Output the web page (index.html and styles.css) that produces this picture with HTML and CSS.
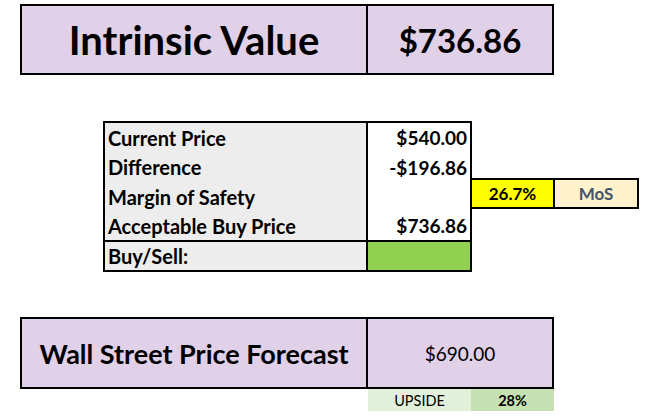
FILE: index.html
```html
<!DOCTYPE html>
<html>
<head>
<meta charset="utf-8">
<link rel="stylesheet" href="styles.css">
</head>
<body>
<div class="sheet">
  <div class="hero">
    <div class="hero-label">Intrinsic Value</div>
    <div class="hero-value">$736.86</div>
  </div>

  <div class="calc">
    <div class="calc-table">
      <div class="lbl">Current Price</div><div class="val">$540.00</div>
      <div class="lbl">Difference</div><div class="val">-$196.86</div>
      <div class="lbl">Margin of Safety</div><div class="val"></div>
      <div class="lbl">Acceptable Buy Price</div><div class="val">$736.86</div>
      <div class="lbl foot">Buy/Sell:</div><div class="val foot signal"></div>
    </div>
    <div class="mos">
      <div class="mos-pct">26.7%</div>
      <div class="mos-tag">MoS</div>
    </div>
  </div>

  <div class="forecast">
    <div class="forecast-label">Wall Street Price Forecast</div>
    <div class="forecast-value">$690.00</div>
  </div>
  <div class="upside">
    <div class="upside-label">UPSIDE</div>
    <div class="upside-value">28%</div>
  </div>
</div>
</body>
</html>
```
FILE: styles.css
```css
html, body {
  margin: 0;
  padding: 0;
  background: #ffffff;
}

.sheet {
  font-family: Lato, "Open Sans", sans-serif;
  color: #000;
  padding: 4px 0 0 20px;
  display: flex;
  flex-direction: column;
  align-items: flex-start;
}

/* top block */
.hero {
  display: flex;
  border: 2px solid #000;
  background: #e0d0e8;
  height: 67px;
}
.hero-label,
.hero-value {
  display: flex;
  align-items: center;
  justify-content: center;
  font-weight: 700;
}
.hero-label {
  width: 344px;
  border-right: 2px solid #000;
  font-size: 40px;
}
.hero-value {
  width: 184px;
  font-size: 33px;
}

/* calculation table */
.calc {
  display: flex;
  align-items: flex-start;
  margin: 46px 0 0 83px;
}
.calc-table {
  display: grid;
  grid-template-columns: 263px 102px;
  grid-template-rows: 29px 30px 29px 29px 30px;
  border: 2px solid #000;
  font-weight: 700;
  font-size: 20px;
}
.lbl {
  background: #ededed;
  border-right: 2px solid #000;
  padding-left: 3px;
  display: flex;
  align-items: center;
}
.val {
  background: #fff;
  display: flex;
  align-items: center;
  justify-content: flex-end;
  padding-right: 3px;
  font-size: 19px;
}
.foot {
  border-top: 2px solid #000;
}
.signal {
  background: #92d050;
}

.mos {
  display: flex;
  margin: 57px 0 0 -2px;
  font-weight: 700;
}
.mos-pct,
.mos-tag {
  height: 27px;
  border: 2px solid #000;
  display: flex;
  align-items: center;
  justify-content: center;
}
.mos-pct {
  width: 81px;
  background: #ffff00;
  font-size: 17px;
}
.mos-tag {
  width: 82px;
  margin-left: -2px;
  background: #fff2cc;
  color: #44546a;
  font-size: 17px;
}

/* forecast */
.forecast {
  display: flex;
  margin-top: 45px;
  border: 2px solid #000;
  background: #e0d0e8;
  height: 68px;
}
.forecast-label,
.forecast-value {
  display: flex;
  align-items: center;
  justify-content: center;
}
.forecast-label {
  width: 344px;
  border-right: 2px solid #000;
  font-weight: 700;
  font-size: 27px;
}
.forecast-value {
  width: 184px;
  font-size: 19px;
}

.upside {
  display: flex;
  margin-left: 348px;
  height: 22px;
  font-size: 14.5px;
}
.upside-label,
.upside-value {
  display: flex;
  align-items: center;
  justify-content: center;
}
.upside-label {
  width: 103px;
  background: #e2efda;
}
.upside-value {
  width: 83px;
  background: #c6e0b4;
  font-weight: 700;
}
```
